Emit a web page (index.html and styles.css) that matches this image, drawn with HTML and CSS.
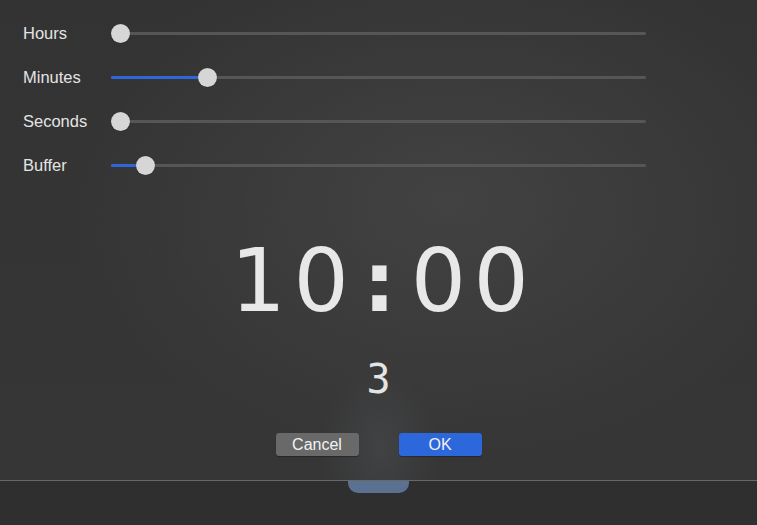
FILE: index.html
```html
<!DOCTYPE html>
<html lang="en">
<head>
    <meta charset="UTF-8">
    <meta name="viewport" content="width=device-width, initial-scale=1.0">
    <title>Timer</title>
    <link rel="stylesheet" href="styles.css">
</head>
<body>
    <div class="dialog">
        <section class="sliders">
            <div class="row">
                <span class="label">Hours</span>
                <div class="track">
                    <div class="fill" style="width: 0px"></div>
                    <div class="thumb" style="left: 0px"></div>
                </div>
            </div>
            <div class="row">
                <span class="label">Minutes</span>
                <div class="track">
                    <div class="fill" style="width: 96px"></div>
                    <div class="thumb" style="left: 87px"></div>
                </div>
            </div>
            <div class="row">
                <span class="label">Seconds</span>
                <div class="track">
                    <div class="fill" style="width: 0px"></div>
                    <div class="thumb" style="left: 0px"></div>
                </div>
            </div>
            <div class="row">
                <span class="label">Buffer</span>
                <div class="track">
                    <div class="fill" style="width: 34px"></div>
                    <div class="thumb" style="left: 25px"></div>
                </div>
            </div>
        </section>
        <div class="time"><span class="digits">10</span><span class="colon">:</span><span class="digits">00</span></div>
        <div class="count">3</div>
        <div class="buttons">
            <button class="btn cancel">Cancel</button>
            <button class="btn ok">OK</button>
        </div>
    </div>
    <div class="below">
        <div class="tab"></div>
    </div>
</body>
</html>
```

FILE: styles.css
```css
body {
    margin: 0;
    padding: 0;
    background-color: #2f2f2f;
    font-family: 'Liberation Sans', Arial, sans-serif;
    color: #e6e6e6;
    overflow: hidden;
}
.dialog {
    height: 481px;
    box-sizing: border-box;
    padding-top: 11px;
    border-bottom: 1px solid #686868;
    background-color: #333333;
    background-image:
        radial-gradient(ellipse 60px 80px at 380px 450px, rgba(120, 130, 145, 0.16), transparent),
        radial-gradient(ellipse 380px 260px at 450px 200px, rgba(80, 80, 80, 0.5), transparent),
        linear-gradient(#333333, #363636);
}
.sliders {
    display: flex;
    flex-direction: column;
}
.row {
    display: flex;
    align-items: center;
    height: 44px;
    padding-left: 23px;
}
.label {
    width: 88px;
    font-size: 16.5px;
    color: #e4e4e4;
    padding-top: 1px;
}
.track {
    position: relative;
    width: 535px;
    height: 3px;
    border-radius: 2px;
    background-color: #565656;
}
.fill {
    height: 100%;
    border-radius: 2px;
    background-color: #2f66d8;
}
.thumb {
    position: absolute;
    top: -8px;
    width: 19px;
    height: 19px;
    border-radius: 50%;
    background-color: #d6d6d6;
    box-shadow: 0 0 1px rgba(0, 0, 0, 0.5);
}
.time {
    display: flex;
    justify-content: center;
    margin-top: 51px;
    padding-left: 10px;
    font-size: 87px;
    line-height: 87px;
    color: #e8e8e8;
}
.digits {
    font-family: 'DejaVu Sans', sans-serif;
    letter-spacing: 7.5px;
}
.colon {
    font-family: 'DejaVu Sans Mono', monospace;
    font-weight: bold;
    margin: 0 5px 0 -3px;
}
.count {
    margin-top: 34px;
    font-family: 'DejaVu Sans Mono', monospace;
    font-size: 40px;
    line-height: 40px;
    text-align: center;
    color: #e4e4e4;
}
.buttons {
    display: flex;
    justify-content: center;
    gap: 40px;
    margin-top: 34px;
}
.btn {
    width: 83px;
    height: 23px;
    padding: 0;
    border: none;
    border-radius: 3px;
    font-family: 'Liberation Sans', Arial, sans-serif;
    font-size: 16px;
    color: #f2f2f2;
    box-shadow: 0 1px 1px rgba(0, 0, 0, 0.3);
}
.cancel { background-color: #696969; }
.ok { background-color: #2d67dc; }
.below {
    display: flex;
    justify-content: center;
    height: 43px;
}
.tab {
    width: 61px;
    height: 12px;
    border-radius: 0 0 10px 10px;
    background-color: #5a7191;
}
```
